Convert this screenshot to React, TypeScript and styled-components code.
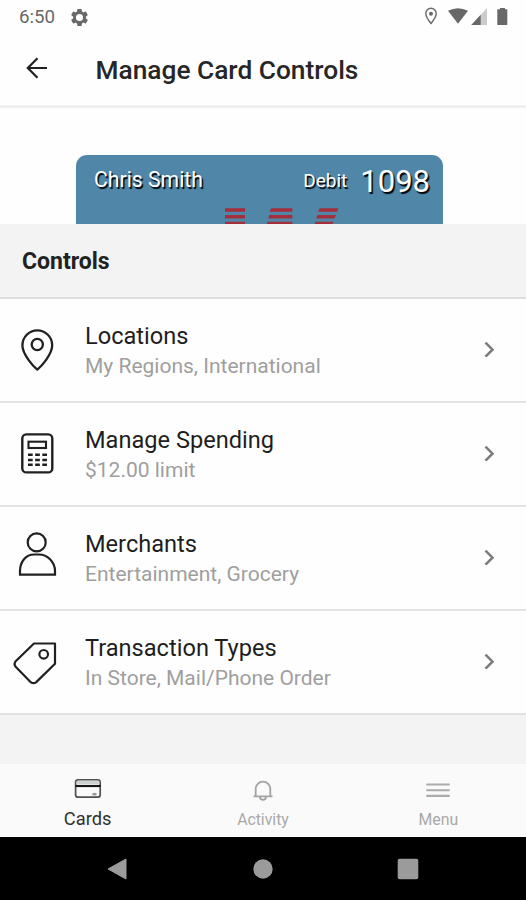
import React from "react";
import styled, { createGlobalStyle } from "styled-components";

const GlobalStyle = createGlobalStyle`
  * { box-sizing: border-box; }
  body { margin: 0; background: #fff; font-family: Roboto, "Liberation Sans", sans-serif; }
  svg { display: block; flex: none; overflow: visible; }
`;

const Screen = styled.div`
  width: 526px;
  height: 900px;
  display: flex;
  flex-direction: column;
  background: #f3f3f3;
  overflow: hidden;
`;

const StatusBar = styled.div`
  height: 34px;
  flex: none;
  display: flex;
  align-items: center;
  padding: 0 17px 0 19px;
  background: #fefefe;
`;

const Clock = styled.span`
  width: 52px;
  font-size: 18.7px;
  line-height: 34px;
  color: #686868;
`;

const StatusIcons = styled.div`
  margin-left: auto;
`;

const AppBar = styled.header`
  height: 74px;
  flex: none;
  display: flex;
  align-items: center;
  padding: 0 0 0 26px;
  background: #fefefe;
  border-bottom: 3px solid #f0f0f0;
`;

const BackIcon = styled.svg`
  margin-bottom: 3px;
`;

const Title = styled.h1`
  margin: 0 0 0 47.5px;
  font-size: 26.3px;
  line-height: 34px;
  font-weight: 500;
  color: #262626;
`;

const CardArea = styled.div`
  height: 116px;
  flex: none;
  padding: 47px 83px 0 76px;
  background: #fefefe;
`;

const BankCard = styled.div`
  height: 69px;
  display: flex;
  flex-direction: column;
  border-radius: 11px 11px 0 0;
  background: #5087a9;
  overflow: hidden;
`;

const CardHeader = styled.div`
  height: 52px;
  flex: none;
  display: flex;
  align-items: center;
  padding: 0 13px 2px 18px;
  color: #fff;
  text-shadow: 1.5px 1.5px 1px #000;
`;

const CardHolder = styled.span`
  flex: 1;
  font-size: 21.2px;
  margin-bottom: 1px;
`;

const CardKind = styled.span`
  font-size: 19px;
  margin: 1px 13px 0 0;
`;

const CardNumber = styled.span`
  font-size: 31px;
  margin-top: 3px;
`;

const SectionHeader = styled.h2`
  height: 75px;
  flex: none;
  margin: 0;
  padding: 20px 22px 0;
  font-size: 23px;
  line-height: 36px;
  font-weight: 700;
  color: #222;
  background: #f3f3f3;
  border-bottom: 2px solid #dedede;
`;

const List = styled.ul`
  margin: 0;
  padding: 0;
  list-style: none;
  flex: none;
`;

const Row = styled.li`
  height: 104px;
  display: flex;
  align-items: center;
  padding-right: 30px;
  background: #fefefe;
  border-bottom: 2px solid #e3e3e3;
`;

const IconSlot = styled.div`
  width: 85px;
  flex: none;
`;

const RowText = styled.div`
  flex: 1;
  padding-top: 2px;
`;

const RowTitle = styled.div`
  font-size: 23.6px;
  line-height: 30px;
  color: #1e1e1e;
`;

const RowDetail = styled.div`
  font-size: 21px;
  line-height: 30px;
  color: #9f9f9f;
`;

const TabBar = styled.nav`
  height: 73px;
  flex: none;
  margin-top: auto;
  display: grid;
  grid-template-columns: repeat(3, 1fr);
  background: #fafafa;
`;

const Tab = styled.div<{ $active?: boolean }>`
  display: flex;
  flex-direction: column;
  align-items: center;
  padding-top: 12px;
  font-size: ${(p) => (p.$active ? 18.3 : 15.8)}px;
  line-height: ${(p) => (p.$active ? 29 : 31)}px;
  color: ${(p) => (p.$active ? "#303030" : "#a9a9a9")};
`;

const SystemBar = styled.div`
  height: 63px;
  flex: none;
  display: flex;
  justify-content: space-between;
  align-items: center;
  padding: 0 107px 0 106px;
  background: #000;
`;

const Pin = () => (
  <svg width="85" height="50" viewBox="0 0 85 50" fill="none" stroke="#202020" strokeWidth="2.3">
    <path d="M37.3 44.6C33.6 41.6 22.4 29.6 22.4 20.3a14.9 14.9 0 0 1 29.8 0C52.2 29.6 41 41.6 37.3 44.6Z" strokeLinejoin="round" />
    <circle cx="37.3" cy="19.5" r="5.6" />
  </svg>
);

const Calculator = () => (
  <svg width="85" height="50" viewBox="0 0 85 50" fill="none" stroke="#202020" strokeWidth="2.4">
    <rect x="22.3" y="5.4" width="30" height="38" rx="4" />
    <rect x="28.5" y="12.7" width="17.5" height="6.3" strokeWidth="2.1" />
    <path d="M28 25.7h19M28 30.9h19M28 35.8h19" strokeWidth="2.5" strokeDasharray="4.7 2.45" />
  </svg>
);

const Person = () => (
  <svg width="85" height="50" viewBox="0 0 85 50" fill="none" stroke="#202020" strokeWidth="2.2">
    <circle cx="36.7" cy="9.4" r="9" />
    <path d="M20 41.7V38c0-9.5 6-16.5 14-16.5h5c8 0 16 7 16 16.5v3.7Z" />
  </svg>
);

const Tag = () => (
  <svg width="85" height="50" viewBox="0 0 85 50" fill="none" stroke="#202020" strokeWidth="2.2">
    <path d="M34 6.5h21v20.2L36 45.4q-2.4 1.6-5 0L15.4 29.5q-1.7-2.5 0-5Z" strokeLinejoin="round" />
    <circle cx="43.7" cy="17.3" r="4.3" />
  </svg>
);

const Chevron = () => (
  <svg width="12" height="18" viewBox="0 0 12 18" fill="none" stroke="#7b7b7b" strokeWidth="2.5">
    <path d="m1.5 1.7 7 7-7 7" />
  </svg>
);

const controls = [
  { title: "Locations", detail: "My Regions, International", icon: <Pin /> },
  { title: "Manage Spending", detail: "$12.00 limit", icon: <Calculator /> },
  { title: "Merchants", detail: "Entertainment, Grocery", icon: <Person /> },
  { title: "Transaction Types", detail: "In Store, Mail/Phone Order", icon: <Tag /> },
];

export default function App() {
  return (
    <Screen>
      <GlobalStyle />
      <StatusBar>
        <Clock>6:50</Clock>
        <svg width="17" height="17" viewBox="2 2 20 20" fill="#686868" fillRule="evenodd">
          <path d="M19.43 12.98c.04-.32.07-.64.07-.98s-.03-.66-.07-.98l2.11-1.65c.19-.15.24-.42.12-.64l-2-3.46c-.12-.22-.39-.3-.61-.22l-2.49 1c-.52-.4-1.08-.73-1.69-.98l-.38-2.65C14.46 2.18 14.25 2 14 2h-4c-.25 0-.46.18-.49.42l-.38 2.65c-.61.25-1.17.59-1.69.98l-2.49-1c-.23-.09-.49 0-.61.22l-2 3.46c-.13.22-.07.49.12.64l2.11 1.65c-.04.32-.07.65-.07.98s.03.66.07.98l-2.11 1.65c-.19.15-.24.42-.12.64l2 3.46c.12.22.39.3.61.22l2.49-1c.52.4 1.08.73 1.69.98l.38 2.65c.03.24.24.42.49.42h4c.25 0 .46-.18.49-.42l.38-2.65c.61-.25 1.17-.59 1.69-.98l2.49 1c.23.09.49 0 .61-.22l2-3.46c.12-.22.07-.49-.12-.64ZM12 16.2a4.2 4.2 0 1 1 0-8.4 4.2 4.2 0 0 1 0 8.4Z" />
        </svg>
        <StatusIcons>
          <svg width="86" height="20" viewBox="0 0 86 20" fill="#686868">
            <path d="M8 16.5C6 14 2.8 9.8 2.8 6.5a5.2 5.2 0 0 1 10.4 0C13.2 9.8 10 14 8 16.5Z" fill="none" stroke="#686868" strokeWidth="1.4" />
            <circle cx="8" cy="6.7" r="2" />
            <path d="M25 3.8Q35 -1.3 45 3.8L35 16.8Z" />
            <path d="M64 1v17H48.5Z" fill="#cbcbcb" />
            <path d="M57.7 7.8V18h-9.5Z" />
            <path d="M77 2.2V1h5v1.2h2.3V18h-10V2.2Z" />
          </svg>
        </StatusIcons>
      </StatusBar>
      <AppBar>
        <BackIcon width="22" height="22" viewBox="0 0 22 22" fill="none" stroke="#202020" strokeWidth="2.2">
          <path d="M21 11H2M11.5 1.2 1.8 11l9.7 9.8" />
        </BackIcon>
        <Title>Manage Card Controls</Title>
      </AppBar>
      <CardArea>
        <BankCard>
          <CardHeader>
            <CardHolder>Chris Smith</CardHolder>
            <CardKind>Debit</CardKind>
            <CardNumber>1098</CardNumber>
          </CardHeader>
          <svg width="367" height="17" viewBox="0 0 367 17" fill="#a22f3b">
            <path d="M149 1.3h20v3.4h-20ZM149 8h20v3.4h-20ZM149 14.7h20V17h-20Z" />
            <path d="M195 1.3h21.3v3.4h-22.6ZM193.2 8h23.1v3.4h-24.1ZM191.5 14.7h24.8V17h-25.5Z" />
            <path d="M243.5 1.3h19l-1.5 3.4h-19ZM241.5 8h18.5l-1.5 3.4h-18.5ZM239.5 14.7h18l-1 2.3h-18Z" />
          </svg>
        </BankCard>
      </CardArea>
      <SectionHeader>Controls</SectionHeader>
      <List>
        {controls.map((c) => (
          <Row key={c.title}>
            <IconSlot>{c.icon}</IconSlot>
            <RowText>
              <RowTitle>{c.title}</RowTitle>
              <RowDetail>{c.detail}</RowDetail>
            </RowText>
            <Chevron />
          </Row>
        ))}
      </List>
      <TabBar>
        <Tab $active>
          <svg width="28" height="28" viewBox="0 0 28 28" fill="none" stroke="#505050" strokeWidth="1.7">
            <rect x="1.6" y="3.8" width="24.6" height="17.4" rx="2.5" fill="#fafafa" />
            <path d="M2.5 8V6q0-1.5 1.5-1.5h20q1.5 0 1.5 1.5v2Z" fill="#cdd2d0" stroke="none" />
            <path d="M1.5 10h25" stroke="#161616" strokeWidth="2.2" />
            <path d="M18.5 18.2h4" stroke="#999" strokeWidth="2.5" />
          </svg>
          Cards
        </Tab>
        <Tab>
          <svg width="28" height="28" viewBox="0 0 28 28" fill="none" stroke="#a3a3a3" strokeWidth="1.8">
            <path d="M4.5 20.3h19M6.7 19.5V13a7.3 7.3 0 0 1 14.6 0V19.5" />
            <path d="M11 20.8a3 3 0 0 0 6 0" />
          </svg>
          Activity
        </Tab>
        <Tab>
          <svg width="28" height="28" viewBox="0 0 28 28" stroke="#ababab" strokeWidth="2.1">
            <path d="M2.3 8.5h23.4M2.3 14.2h23.4M2.3 19.9h23.4" />
          </svg>
          Menu
        </Tab>
      </TabBar>
      <SystemBar>
        <svg width="22" height="24" viewBox="0 0 22 24" fill="#9b9b9b" stroke="#9b9b9b" strokeLinejoin="round">
          <path d="M20 2v20L2 12Z" />
        </svg>
        <svg width="20" height="20" viewBox="0 0 20 20" fill="#9b9b9b">
          <circle cx="10" cy="10" r="9.7" />
        </svg>
        <svg width="22" height="22" viewBox="0 0 22 22" fill="#9b9b9b">
          <rect x=".7" y=".7" width="20.6" height="20.6" rx="2" />
        </svg>
      </SystemBar>
    </Screen>
  );
}
